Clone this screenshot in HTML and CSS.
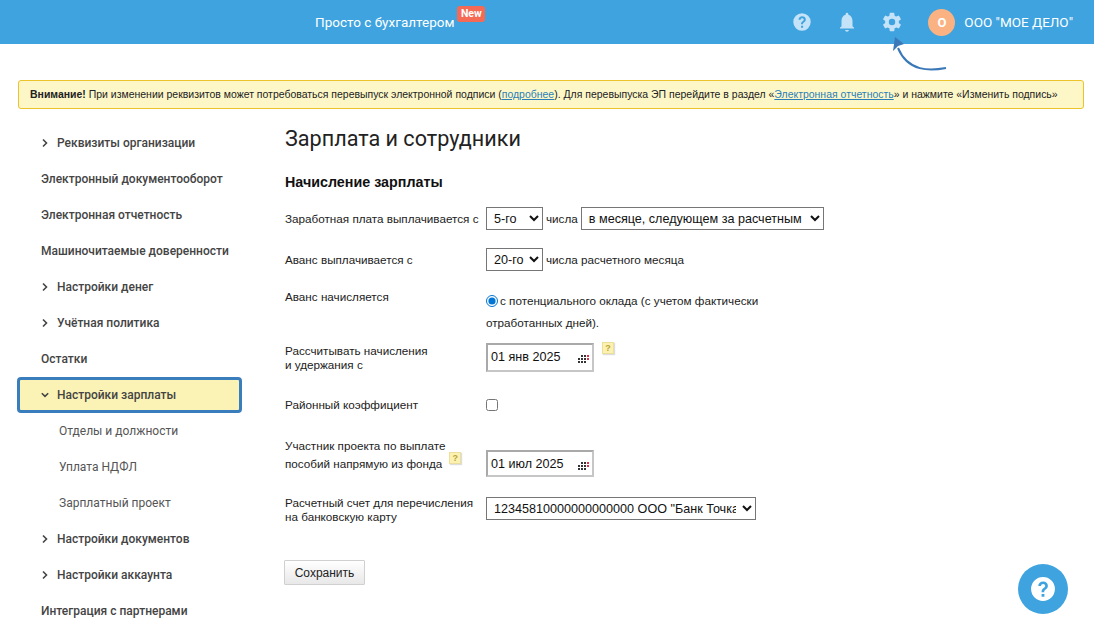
FILE: index.html
```html
<!DOCTYPE html>
<html lang="ru">
<head>
<meta charset="utf-8">
<title>Зарплата и сотрудники</title>
<link rel="stylesheet" href="styles.css">
</head>
<body>
<header class="topbar">
  <div class="brand"><span>Просто с бухгалтером</span><span class="badge-new">New</span></div>
  <div class="top-actions">
    <svg class="top-icon" viewBox="0 0 24 24"><path fill="#c4e3f8" fill-rule="evenodd" d="M12 2.500a9.500 9.500 0 1 0 0 19 9.500 9.500 0 0 0 0-19zM11 16.200h2.200v2.200H11zM12.200 5.800c-2.200 0-3.900 1.500-4 3.700h2.200c.1-1 .8-1.700 1.800-1.700s1.700.6 1.700 1.500c0 .8-.4 1.200-1.200 1.800-1.200.9-1.800 1.700-1.700 3.400h2.100c0-1.100.3-1.500 1.200-2.200 1.100-.8 1.800-1.700 1.800-3.100 0-2.100-1.700-3.400-3.900-3.400z"/></svg>
    <svg class="top-icon" viewBox="0 0 24 24"><path fill="#c4e3f8" d="M12 22.500c1.200 0 2-.8 2-1.800h-4c0 1 .8 1.800 2 1.800zM18 16.500v-5.500c0-3.400-1.600-6-4.500-6.800V3.500a1.500 1.500 0 0 0-3 0v.7C7.600 5 6 7.600 6 11v5.500l-1.700 1.800v.9h15.400v-.9z"/></svg>
    <svg class="top-icon" viewBox="0 0 24 24"><path fill="#c4e3f8" d="M19.430 12.980c.04-.32.07-.64.07-.98s-.03-.66-.07-.98l2.110-1.650c.19-.15.24-.42.12-.64l-2-3.460c-.12-.22-.39-.3-.61-.22l-2.490 1c-.52-.4-1.080-.73-1.690-.98l-.38-2.650A.49.49 0 0 0 14 2h-4c-.25 0-.46.18-.49.42l-.38 2.650c-.61.25-1.170.59-1.690.98l-2.490-1c-.23-.09-.49 0-.61.22l-2 3.460c-.13.22-.07.49.12.640l2.110 1.650c-.04.32-.07.65-.07.98s.03.660.07.980l-2.110 1.650c-.19.150-.24.420-.12.640l2 3.460c.12.220.39.300.61.220l2.490-1c.52.400 1.080.730 1.690.980l.38 2.650c.03.240.24.420.49.420h4c.25 0 .46-.18.49-.42l.38-2.650c.61-.25 1.170-.59 1.690-.98l2.490 1c.23.090.49 0 .61-.22l2-3.460c.12-.22.07-.49-.12-.64zM12 15.500a3.500 3.500 0 1 1 0-7 3.500 3.500 0 0 1 0 7z"/></svg>
    <div class="account"><span class="avatar">О</span><span>ООО "МОЕ ДЕЛО"</span></div>
  </div>
</header>

<svg class="hint-arrow" viewBox="0 0 70 45" width="70" height="45"><path d="M66 38C50 41 28 42 18 18" fill="none" stroke="#3a78b8" stroke-width="2"/><path d="M15 7L13 21l5-5 6-2z" fill="#3a78b8"/></svg>

<div class="alert"><b>Внимание!</b> При изменении реквизитов может потребоваться перевыпуск электронной подписи (<a href="#">подробнее</a>). Для перевыпуска ЭП перейдите в раздел «<a href="#">Электронная отчетность</a>» и нажмите «Изменить подпись»</div>

<div class="layout">
  <nav class="sidebar">
    <div class="nav-item has-arrow"><svg class="chev" viewBox="0 0 8 10"><path d="M2 1.500L5.500 5 2 8.500"/></svg>Реквизиты организации</div>
    <div class="nav-item">Электронный документооборот</div>
    <div class="nav-item">Электронная отчетность</div>
    <div class="nav-item">Машиночитаемые доверенности</div>
    <div class="nav-item has-arrow"><svg class="chev" viewBox="0 0 8 10"><path d="M2 1.500L5.500 5 2 8.500"/></svg>Настройки денег</div>
    <div class="nav-item has-arrow"><svg class="chev" viewBox="0 0 8 10"><path d="M2 1.500L5.500 5 2 8.500"/></svg>Учётная политика</div>
    <div class="nav-item">Остатки</div>
    <div class="nav-item has-arrow active"><svg class="chev" viewBox="0 0 8 10"><path d="M.8 3.200L4 6.400l3.200-3.200"/></svg>Настройки зарплаты</div>
    <div class="nav-item child">Отделы и должности</div>
    <div class="nav-item child">Уплата НДФЛ</div>
    <div class="nav-item child">Зарплатный проект</div>
    <div class="nav-item has-arrow"><svg class="chev" viewBox="0 0 8 10"><path d="M2 1.500L5.500 5 2 8.500"/></svg>Настройки документов</div>
    <div class="nav-item has-arrow"><svg class="chev" viewBox="0 0 8 10"><path d="M2 1.500L5.500 5 2 8.500"/></svg>Настройки аккаунта</div>
    <div class="nav-item">Интеграция с партнерами</div>
  </nav>

  <main class="content">
    <h1 class="page-title">Зарплата и сотрудники</h1>
    <h2 class="section-title">Начисление зарплаты</h2>

    <div class="row row-salary">
      <label class="row-label">Заработная плата выплачивается с</label>
      <div class="row-field">
        <select class="sel sel-day"><option>5-го</option></select>
        <span>числа</span>
        <select class="sel sel-month"><option>в месяце, следующем за расчетным</option></select>
      </div>
    </div>

    <div class="row row-advance">
      <label class="row-label">Аванс выплачивается с</label>
      <div class="row-field">
        <select class="sel sel-day"><option>20-го</option></select>
        <span>числа расчетного месяца</span>
      </div>
    </div>

    <div class="row row-accrual">
      <label class="row-label">Аванс начисляется</label>
      <div class="radio-text"><input type="radio" class="radio" checked>с потенциального оклада (с учетом фактически<br>отработанных дней).</div>
    </div>

    <div class="row row-start">
      <label class="row-label">Рассчитывать начисления<br>и удержания с</label>
      <div class="row-field top">
        <div class="date date-tall"><span>01 янв 2025</span>
          <svg class="cal" viewBox="0 0 11 8"><path fill="#333" d="M3 0h2v2H3zM6 0h2v2H6zM0 3h2v2H0zM3 3h2v2H3zM6 3h2v2H6zM0 6h2v2H0zM3 6h2v2H3zM6 6h2v2H6z"/><path fill="#d9334a" d="M9 0h2v2H9zM9 3h2v2H9z"/></svg>
        </div>
        <span class="help-sq">?</span>
      </div>
    </div>

    <div class="row row-coef">
      <label class="row-label">Районный коэффициент</label>
      <input type="checkbox" class="check">
    </div>

    <div class="row row-fund">
      <label class="row-label fund-label">Участник проекта по выплате<br>пособий напрямую из фонда<span class="help-sq help-inline">?</span></label>
      <div class="date date-short"><span>01 июл 2025</span>
        <svg class="cal" viewBox="0 0 11 8"><path fill="#333" d="M3 0h2v2H3zM6 0h2v2H6zM0 3h2v2H0zM3 3h2v2H3zM6 3h2v2H6zM0 6h2v2H0zM3 6h2v2H3zM6 6h2v2H6z"/><path fill="#d9334a" d="M9 0h2v2H9zM9 3h2v2H9z"/></svg>
      </div>
    </div>

    <div class="row row-account">
      <label class="row-label">Расчетный счет для перечисления<br>на банковскую карту</label>
      <select class="sel sel-account"><option>12345810000000000000 ООО "Банк Точка"</option></select>
    </div>

    <button class="save" type="button">Сохранить</button>
  </main>
</div>

<div class="float-help"><svg viewBox="0 0 24 24" width="26" height="26"><path fill="#fff" fill-rule="evenodd" d="M12 1a11 11 0 1 0 0 22 11 11 0 0 0 0-22zM10.700 16.500h2.600v2.600h-2.600zM12.200 5c-2.600 0-4.500 1.700-4.600 4.200h2.500c.1-1.200.9-1.900 2-1.900s1.900.7 1.900 1.700c0 .9-.5 1.400-1.400 2.100-1.300 1-2 1.900-1.900 3.800h2.400c0-1.200.4-1.700 1.400-2.500 1.200-.9 2-1.900 2-3.500C16.500 6.500 14.700 5 12.200 5z"/></svg></div>
</body>
</html>
```
FILE: styles.css
```css
* { box-sizing: border-box; }
html, body { margin: 0; height: 100%; overflow: hidden; }
body { font-family: "Liberation Sans", Arial, sans-serif; font-size: 11.700px; color: #222; background: #fff; position: relative; }

.topbar { height: 44px; background: #3ea3de; display: flex; align-items: center; padding-left: 315px; padding-right: 21px; color: #fff; font-family: Roboto, sans-serif; font-size: 13.500px; }
.brand { display: flex; align-items: center; }
.badge-new { background: #f46a55; border-radius: 3px; font-size: 10.500px; font-weight: 700; line-height: 16px; height: 16px; padding: 0 3.500px; margin: -17px 0 0 3px; }
.top-actions { margin-left: auto; display: flex; align-items: center; }
.top-icon { width: 22px; height: 22px; margin-right: 23px; display: block; }
.top-actions .top-icon:nth-of-type(3) { margin-right: 25px; }
.account { display: flex; align-items: center; gap: 9px; }
.avatar { width: 27px; height: 27px; border-radius: 50%; background: #fbb283; display: flex; align-items: center; justify-content: center; font-weight: 700; font-size: 13px; }

.hint-arrow { position: absolute; left: 880px; top: 30px; }

.alert { margin: 36px 10px 0 18px; height: 29px; background: #fdf7c8; border: 1px solid #ecc32b; border-radius: 3px; font-size: 10.480px; line-height: 27px; padding-left: 11px; color: #222; white-space: nowrap; }
.alert a { color: #2a7fb8; }

.layout { display: flex; margin-top: 16px; }
.sidebar { width: 267px; padding-left: 17px; flex: none; }
.nav-item { height: 36px; width: 225px; display: flex; align-items: center; padding-left: 24px; font-family: Roboto, sans-serif; font-weight: 500; font-size: 12px; color: #444; position: relative; }
.nav-item.has-arrow { padding-left: 40px; }
.nav-item.child { padding-left: 42px; font-weight: 400; color: #555; }
.nav-item.active { background: #fbf3b5; border: 3px solid #3a7dbd; border-radius: 4px; padding-left: 37px; }
.chev { position: absolute; left: 24px; top: 13px; width: 8px; height: 10px; }
.chev path { fill: none; stroke: #444; stroke-width: 1.600; }
.active .chev { left: 21px; top: 10px; }

.content { flex: 1; min-width: 0; padding-left: 17px; }
.page-title { font-family: Roboto, sans-serif; font-weight: 400; font-size: 21.600px; line-height: 26px; margin: 0; color: #222; padding: 1px 0 0 1px; }
.section-title { font-family: "Liberation Sans", Arial, sans-serif; font-weight: 700; font-size: 14.300px; line-height: 16px; margin: 22px 0 0; padding-left: 1px; color: #111; }

.row { display: grid; grid-template-columns: 202px 1fr; align-items: center; }
.row-label { line-height: 14px; padding-left: 1px; }
.row-field { display: flex; align-items: center; gap: 3px; }
.row-field.top { align-items: flex-start; }

.sel { font-family: "Liberation Sans", Arial, sans-serif; font-size: 12.600px; height: 23px; background: #fff; border: 1px solid #767676; border-radius: 0; color: #111; padding-left: 3px; }
.sel-day { width: 57px; }
.sel-month { width: 243px; }
.sel-account { width: 270px; height: 23px; justify-self: start; margin-top: 1px; padding-right: 3px; }

.row-salary { margin-top: 17px; }
.row-advance { margin-top: 18px; }
.row-accrual { margin-top: 15px; align-items: start; }
.row-accrual .row-label { line-height: 22px; margin-top: 0; }
.radio-text { line-height: 22px; padding-top: 4px; }
.radio { width: 12px; height: 12px; margin: 0 2px 0 0; vertical-align: -2px; accent-color: #0075d6; }
.row-start { margin-top: 9px; }
.date { border: 2px solid #c6c6c6; border-top-color: #a9a9a9; border-left-color: #a9a9a9; background: #fff; display: flex; align-items: center; justify-content: space-between; font-size: 12.600px; color: #111; padding: 0 3px 0 3px; width: 108px; }
.date-tall { height: 29px; padding-bottom: 2px; }
.date-short { height: 27px; margin-top: 13px; }
.cal { width: 11px; height: 8px; margin-top: 4px; }
.help-sq { display: inline-block; width: 12px; height: 12px; background: #fbf1b0; border: 1px solid #ecdf9c; box-shadow: 1px 1px 1px #ddd; font-size: 9px; line-height: 10px; text-align: center; color: #b9a33c; font-weight: 700; margin-left: 5px; margin-top: -1px; }
.row-coef { margin-top: 26px; }
.check { width: 12px; height: 12px; margin: 0; }
.row-fund { margin-top: 25px; align-items: start; }
.fund-label { line-height: 18px; }
.help-inline { margin-left: 7px; margin-top: 0; vertical-align: 2px; transform: translateY(-5px); }
.row-account { margin-top: 19px; align-items: start; }

.save { margin-top: 36px; width: 81px; height: 25px; display: block; font-family: "Liberation Sans", Arial, sans-serif; font-size: 12px; color: #222; border: 1px solid #d0d0d0; border-radius: 1px; background: linear-gradient(#fff, #e8e8e8); padding: 0; }

.float-help { position: fixed; left: 1018px; top: 564px; width: 50px; height: 50px; border-radius: 50%; background: #3ea3de; display: flex; align-items: center; justify-content: center; }
```
